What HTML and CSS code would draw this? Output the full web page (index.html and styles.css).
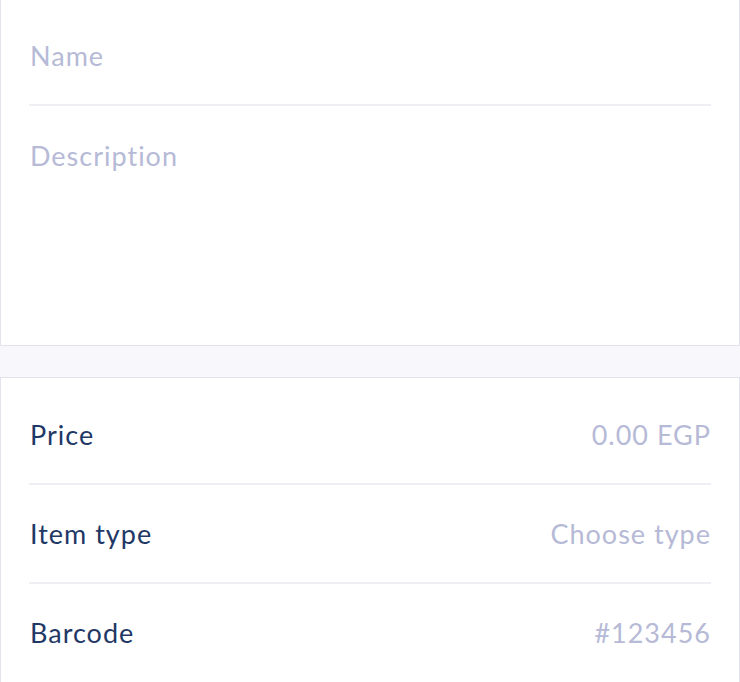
FILE: index.html
```html
<!DOCTYPE html>
<html>
<head>
<meta charset="utf-8">
<link rel="stylesheet" href="styles.css">
</head>
<body>
<div class="card card-top">
  <div class="row">
    <span class="placeholder">Name</span>
  </div>
  <div class="divider"></div>
  <div class="desc">
    <span class="placeholder">Description</span>
  </div>
</div>
<div class="gap"></div>
<div class="card card-bottom">
  <div class="row">
    <span class="label">Price</span>
    <span class="placeholder">0.00 EGP</span>
  </div>
  <div class="divider"></div>
  <div class="row">
    <span class="label">Item type</span>
    <span class="placeholder">Choose type</span>
  </div>
  <div class="divider"></div>
  <div class="row">
    <span class="label">Barcode</span>
    <span class="placeholder">#123456</span>
  </div>
</div>
</body>
</html>
```

FILE: styles.css
```css
html, body {
  margin: 0;
  padding: 0;
  background: #f8f8fc;
  font-family: Lato, "Open Sans", sans-serif;
}
.card {
  background: #ffffff;
  border: 1px solid #e3e3ee;
  padding: 0 28px;
}
.card-top {
  border-top: none;
  padding-top: 7px;
  height: 338px;
}
.card-bottom {
  padding-top: 8px;
  height: 320px;
}
.gap {
  height: 31px;
}
.row {
  height: 97px;
  display: flex;
  align-items: center;
  justify-content: space-between;
  padding: 0 0 0 1px;
}
.divider {
  height: 2px;
  background: #efeff3;
}
.desc {
  padding: 33px 1px 0;
}
.placeholder,
.label {
  font-size: 27px;
  letter-spacing: 1px;
}
.placeholder {
  color: #b6bad6;
}
.label {
  color: #1f3866;
}
```
